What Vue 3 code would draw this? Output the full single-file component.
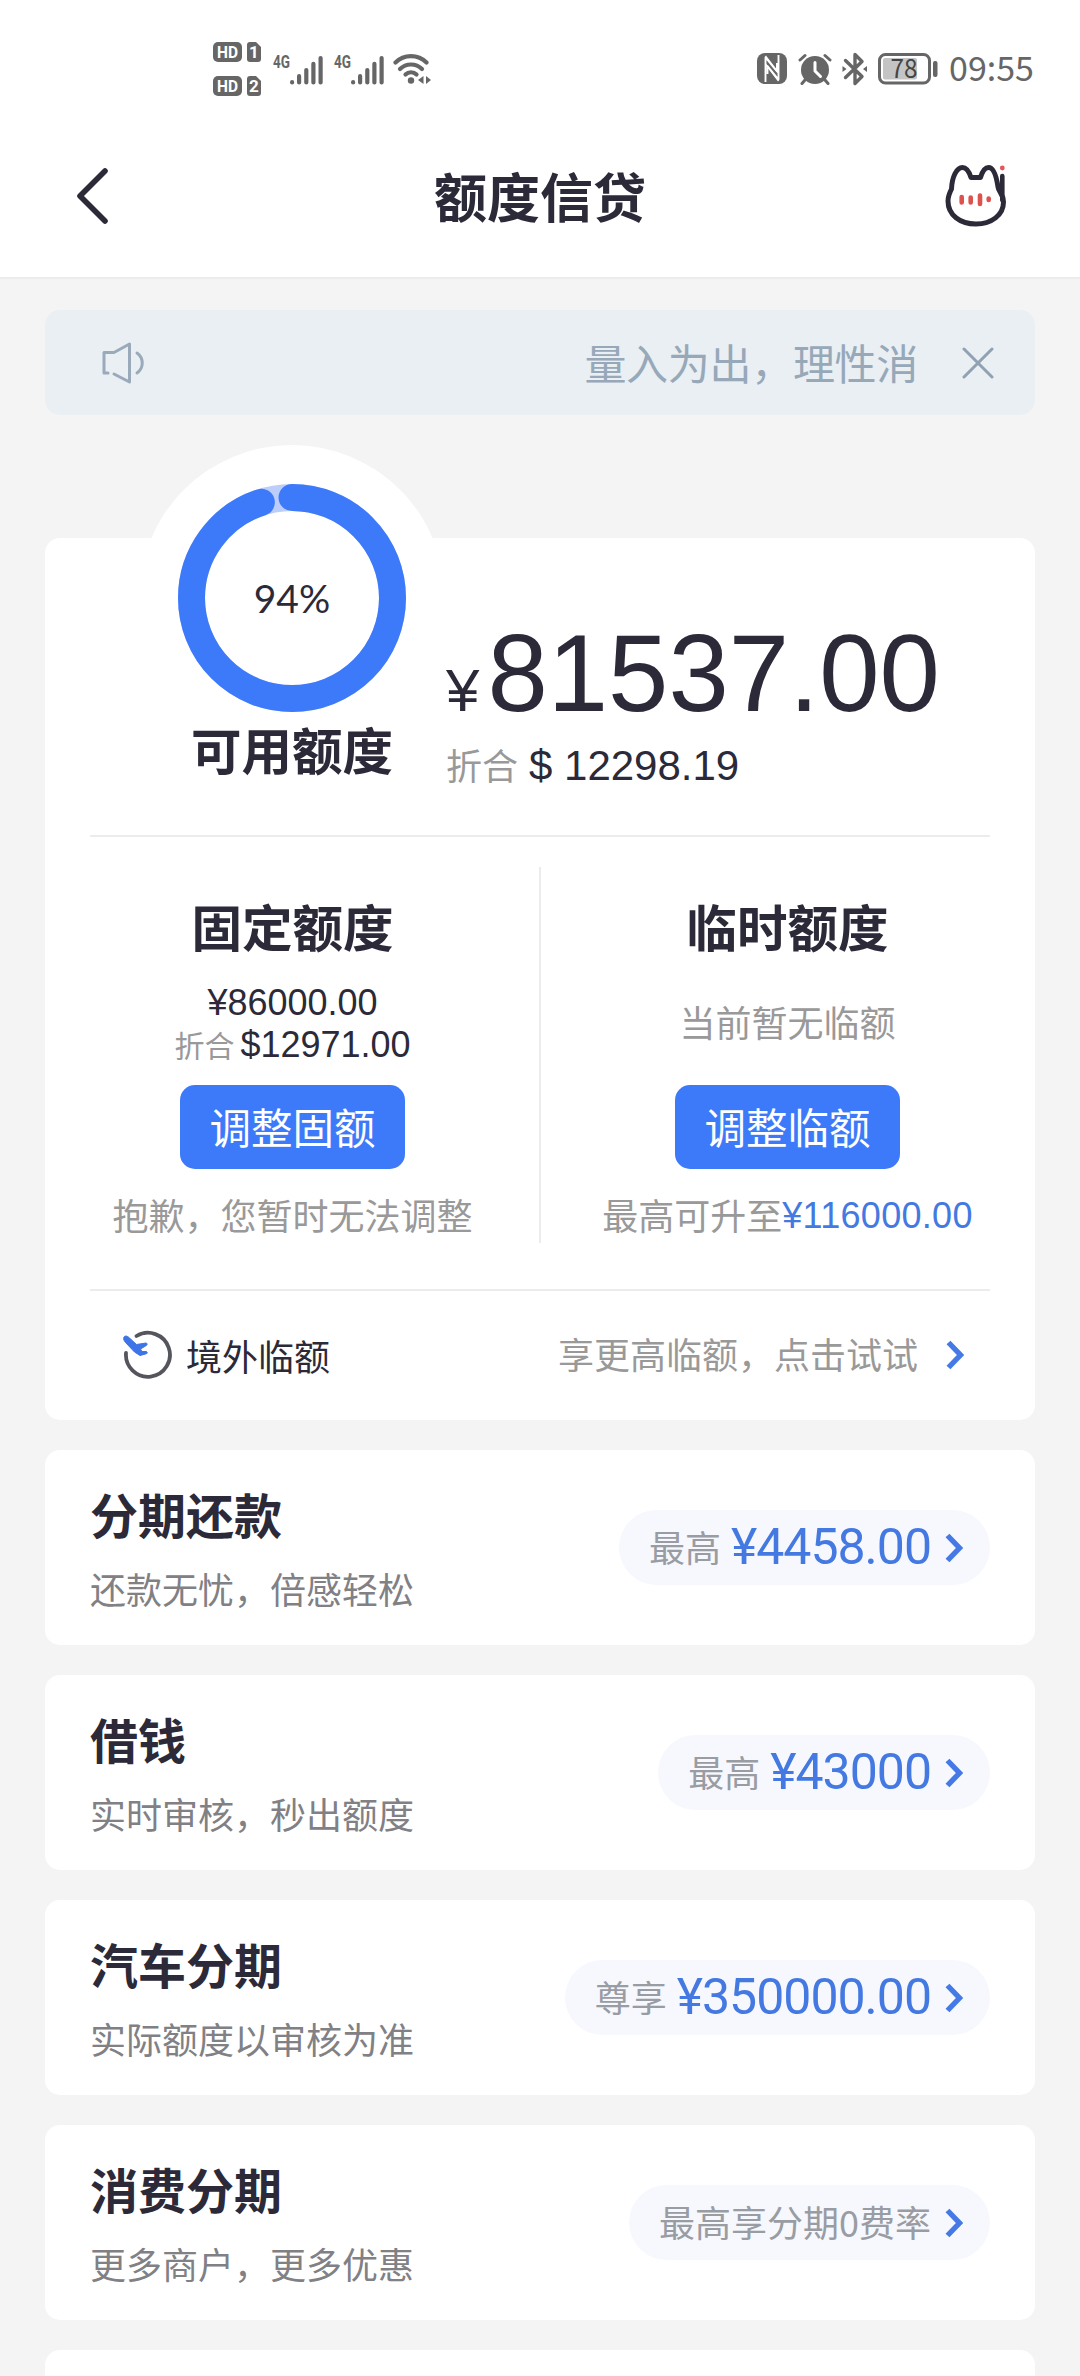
<script setup>
const products = [
  { title: '分期还款', desc: '还款无忧，倍感轻松', label: '最高', amount: '¥4458.00' },
  { title: '借钱', desc: '实时审核，秒出额度', label: '最高', amount: '¥43000' },
  { title: '汽车分期', desc: '实际额度以审核为准', label: '尊享', amount: '¥350000.00' },
  { title: '消费分期', desc: '更多商户，更多优惠', label: '最高享分期0费率', amount: '' },
]

const radius = 100.5
const circumference = 2 * Math.PI * radius
const usedArc = circumference * 0.949
</script>

<template>
  <div class="page">
    <header class="top">
      <div class="status">
        <div class="status-left">
          <div class="hd-col">
            <svg v-for="n in 2" :key="n" class="hd" width="49" height="20" viewBox="0 0 49 20">
              <rect x="0" y="0" width="29" height="20" rx="5" fill="#666" />
              <text x="4" y="16" class="hd-text" textLength="21" lengthAdjust="spacingAndGlyphs">HD</text>
              <path d="M37 0h6l5 5v12a3 3 0 0 1-3 3h-8a3 3 0 0 1-3-3V3a3 3 0 0 1 3-3z" fill="#666" />
              <text x="41" y="16" class="hd-text" text-anchor="middle">{{ n }}</text>
            </svg>
          </div>
          <svg v-for="n in 2" :key="'s' + n" class="signal" width="53" height="34" viewBox="-3 -2 53 34">
            <text x="0" y="14" class="net" textLength="17" lengthAdjust="spacingAndGlyphs">4G</text>
            <g stroke="#666" stroke-width="4.2" stroke-linecap="round">
              <path d="M19.5 28.2v.3M26.5 22.2v6.3M33.7 16v12.5M40.8 9.8v18.7M48 4v24.5" transform="translate(-.4 0)" />
            </g>
          </svg>
          <svg class="wifi" width="38" height="32" viewBox="0 0 38 32">
            <g fill="none" stroke="#666" stroke-width="4.200" stroke-linecap="round">
              <path d="M2.500 9.500C11 1 25 1 33.500 9.500" />
              <path d="M7 16c6-6 16-6 22 0" />
              <path d="M12.500 21.500c3-3 8-3 11 0" />
            </g>
            <circle cx="18" cy="27.500" r="3.200" fill="#666" />
            <path d="M30.500 23v8l-5.500-4zM33 23l5 4-5 4z" fill="#666" />
          </svg>
        </div>
        <div class="status-right">
          <svg class="nfc" width="30" height="31" viewBox="0 0 30 31">
            <rect x="0" y="0" width="30" height="31" rx="8" fill="#666" />
            <path d="M8.500 29V4.500L20 18.500V10M21.500 2V26.500L10.500 13V21" fill="none" stroke="#fff" stroke-width="1.900" stroke-linejoin="round" />
            <path d="M8.500 3L21.500 20M8.500 11L21.500 28" stroke="#fff" stroke-width="1.300" />
          </svg>
          <svg class="alarm" width="34" height="32" viewBox="0 0 34 32">
            <circle cx="17" cy="17" r="14" fill="#666" />
            <path d="M2 7l5-4.500M32 7l-5-4.500M7 27l-3 3.500M27 27l3 3.500" stroke="#666" stroke-width="3" stroke-linecap="round" />
            <path d="M17 9.500V18l5.500 5.500" fill="none" stroke="#fff" stroke-width="3" stroke-linecap="round" stroke-linejoin="round" />
          </svg>
          <svg class="bt" width="26" height="34" viewBox="0 0 26 34">
            <path d="M3.500 8.500L20 24.500l-7 7V2.500l7 7L3.500 25.500" fill="none" stroke="#666" stroke-width="3.400" stroke-linecap="round" stroke-linejoin="round" />
            <path d="M.5 14v6l4-3zM25 14v6l-4-3z" fill="#666" />
          </svg>
          <svg class="battery" width="60" height="32" viewBox="0 0 60 32">
            <rect x="1.500" y="1.500" width="50" height="28.500" rx="6" fill="#fff" stroke="#666" stroke-width="3" />
            <rect x="5" y="5" width="34" height="21.500" rx="2" fill="#c4c4c4" />
            <rect x="55" y="8" width="4.500" height="16" rx="2" fill="#666" />
            <text x="12.500" y="25" class="battery-text" textLength="27" lengthAdjust="spacingAndGlyphs">78</text>
          </svg>
          <span class="clock">09:55</span>
        </div>
      </div>
      <nav class="nav">
        <svg class="back" width="34" height="58" viewBox="0 0 34 58">
          <path d="M29 4L4 29l25 25" fill="none" stroke="#2c2a38" stroke-width="5.600" stroke-linecap="round" stroke-linejoin="round" />
        </svg>
        <h1>额度信贷</h1>
        <svg class="cat" width="64" height="64" viewBox="0 0 64 64">
          <path d="M27 13.500H36.500C38.500 7 41 3.500 44.500 3.500C50 3.500 52.500 13 54 23C54.500 28 59.500 30 59.500 38C59.500 51 47.500 60 32 60C16 60 4 51 4 37C4 32 6 28 7.500 25C8 13 12.500 3.500 18.500 3.500C22.500 3.500 25 7.500 27 13.500Z" fill="none" stroke="#2c2a38" stroke-width="5" stroke-linejoin="round" />
          <path d="M58.300 12V36" stroke="#2c2a38" stroke-width="4.600" stroke-linecap="round" />
          <circle cx="58.300" cy="4" r="2.400" fill="#e2575a" />
          <path d="M17.700 33v5.500M26.700 33.500v5M36 31.500v8.500M44.700 34.500v1.500" stroke="#de524e" stroke-width="4.600" stroke-linecap="round" />
        </svg>
      </nav>
    </header>

    <section class="notice">
      <svg width="46" height="44" viewBox="0 0 46 44">
        <path d="M7 32H3V11.500h10L28.500 3v38L13 33" fill="none" stroke="#9aaaba" stroke-width="3" stroke-linecap="round" stroke-linejoin="round" />
        <path d="M36 12c7 5 7 15 0 20" fill="none" stroke="#9aaaba" stroke-width="3" stroke-linecap="round" />
      </svg>
      <span class="notice-text">量入为出，理性消</span>
      <svg class="close" width="32" height="32" viewBox="0 0 32 32">
        <path d="M2 2l28 28M30 2L2 30" stroke="#8fa1b3" stroke-width="3" stroke-linecap="round" />
      </svg>
    </section>

    <section class="card quota">
      <div class="bubble"></div>
      <div class="summary">
        <div class="ring-col">
          <div class="ring">
            <svg width="228" height="228" viewBox="0 0 228 228">
              <circle cx="114" cy="114" :r="radius" fill="none" stroke="#bdcdfa" stroke-width="27" />
              <circle
                cx="114" cy="114" :r="radius" fill="none" stroke="#3d7afa" stroke-width="27"
                stroke-linecap="round" :stroke-dasharray="`${usedArc} ${circumference}`"
                transform="rotate(-90 114 114)"
              />
            </svg>
            <span class="percent">94%</span>
          </div>
          <h2>可用额度</h2>
        </div>
        <div class="total">
          <div class="total-main"><span class="yen">¥</span><span class="big">81537.00</span></div>
          <div class="total-sub"><span class="gray">折合</span><span class="num">$ 12298.19</span></div>
        </div>
      </div>

      <div class="split">
        <div class="col">
          <h2>固定额度</h2>
          <div class="figures">
            <div class="num">¥86000.00</div>
            <div class="converted"><span>折合</span><span class="num">$12971.00</span></div>
          </div>
          <button>调整固额</button>
          <p>抱歉，您暂时无法调整</p>
        </div>
        <div class="bar"></div>
        <div class="col">
          <h2>临时额度</h2>
          <div class="figures empty">当前暂无临额</div>
          <button>调整临额</button>
          <p>最高可升至<span class="num blue">¥116000.00</span></p>
        </div>
      </div>

      <div class="overseas">
        <svg class="plane" width="50" height="50" viewBox="0 0 50 50">
          <path d="M14.500 6A22 22 0 1 1 4 23" fill="none" stroke="#55555e" stroke-width="3.800" stroke-linecap="round" />
          <path d="M2 7C3.500 5 6 6.500 7.500 8L14.500 14.500L24 13C26 13.500 25 15.500 23.500 16L18.500 19L20 21.500L24.500 21.500C26 22.500 25 24 23.500 24L18 25.500L12.500 22L3.500 12.500C2 10.500 1 9 2 7Z" fill="#3d74e8" stroke="#3d74e8" stroke-width="1" stroke-linejoin="round" />
        </svg>
        <span class="overseas-title">境外临额</span>
        <span class="overseas-tip">享更高临额，点击试试</span>
        <svg class="chev" width="18" height="30" viewBox="0 0 18 30">
          <path d="M2.500 2.500L14.500 15L2.500 27.500" fill="none" stroke="#4479e6" stroke-width="5.400" />
        </svg>
      </div>
    </section>

    <section v-for="item in products" :key="item.title" class="card product">
      <div class="product-text">
        <h3>{{ item.title }}</h3>
        <p>{{ item.desc }}</p>
      </div>
      <div class="pill">
        <span class="pill-label">{{ item.label }}</span>
        <span v-if="item.amount" class="pill-amount">{{ item.amount }}</span>
        <svg width="18" height="30" viewBox="0 0 18 30">
          <path d="M2.500 2.500L14.500 15L2.500 27.500" fill="none" stroke="#4479e6" stroke-width="5.400" />
        </svg>
      </div>
    </section>
    <section class="card product"></section>
  </div>
</template>

<style>
body {
  background: #f4f4f4;
}
</style>

<style scoped>
.page {
  width: 1080px;
  height: 2376px;
  overflow: hidden;
  background: #f4f4f4;
  color: #2c2a38;
  font-family: "Noto Sans CJK SC", "Noto Sans", sans-serif;
}
h1, h2, h3, p {
  margin: 0;
}
svg {
  display: block;
  flex: none;
}
.num {
  font-family: "Liberation Sans", Arial, sans-serif;
}

.top {
  box-sizing: border-box;
  height: 279px;
  background: #fff;
  border-bottom: 2px solid #ececec;
}
.status {
  display: flex;
  justify-content: space-between;
  align-items: center;
  height: 137px;
  padding: 0 46px 0 213px;
}
.status-left, .status-right {
  display: flex;
  align-items: center;
}
.hd-col {
  display: flex;
  flex-direction: column;
  gap: 14px;
}
.hd-text {
  font: 700 17px Roboto, sans-serif;
  fill: #fff;
}
.net {
  font: 700 19px Roboto, sans-serif;
  fill: #666;
}
.signal {
  margin-left: 8px;
}
.wifi {
  margin-left: 9px;
}
.alarm {
  margin-left: 11px;
}
.bt {
  margin-left: 10px;
}
.battery {
  margin-left: 10px;
}
.battery-text {
  font: 400 26px "Noto Sans CJK SC", sans-serif;
  fill: #444;
}
.clock {
  margin-left: 11px;
  font-size: 34px;
  line-height: 40px;
  padding-bottom: 3px;
  color: #666;
}

.nav {
  display: grid;
  grid-template-columns: 64px 1fr 64px;
  align-items: center;
  height: 118px;
  padding: 0 72px 0 76px;
}
.nav h1 {
  font-size: 53px;
  line-height: 70px;
  font-weight: 700;
  text-align: center;
  padding: 0 4px 2px 0;
}

.notice {
  display: flex;
  align-items: center;
  box-sizing: border-box;
  height: 105px;
  margin: 31px 45px 0;
  padding: 0 41px 0 56px;
  border-radius: 15px;
  background: #e9eff3;
}
.notice-text {
  margin-left: auto;
  font-size: 42px;
  line-height: 60px;
  letter-spacing: -0.3px;
  padding-bottom: 2px;
  color: #97a8b9;
}
.close {
  margin-left: 44px;
}

.card {
  margin: 0 45px;
  border-radius: 15px;
  background: #fff;
}
.quota {
  position: relative;
  height: 882px;
  margin-top: 123px;
}
.bubble {
  position: absolute;
  left: 94px;
  top: -93px;
  width: 306px;
  height: 306px;
  border-radius: 50%;
  background: #fff;
}
.summary {
  position: relative;
  display: flex;
  box-sizing: border-box;
  height: 299px;
  margin: 0 45px;
  padding-left: 88px;
  border-bottom: 2px solid #ececec;
}
.ring-col {
  width: 228px;
  margin-top: -54px;
  text-align: center;
}
.ring {
  display: grid;
  place-items: center;
}
.ring > * {
  grid-area: 1 / 1;
}
.percent {
  font: 400 39px/50px Lato, sans-serif;
}
h2 {
  font-size: 50.500px;
  line-height: 60px;
  font-weight: 700;
}
.ring-col h2 {
  margin-top: 6px;
}
.total {
  margin: 82px 0 0 40px;
}
.total-main {
  display: flex;
  align-items: baseline;
  font-family: "Liberation Sans", Arial, sans-serif;
  height: 108px;
}
.yen {
  font-size: 60px;
  line-height: 60px;
}
.big {
  margin-left: 8px;
  font-size: 108.500px;
  line-height: 108px;
}
.total-sub {
  display: flex;
  align-items: baseline;
  gap: 11px;
  margin-top: 12px;
  font-size: 42px;
  line-height: 50px;
}
.gray {
  font-size: 36px;
  line-height: 48px;
  color: #999;
}

.split {
  display: flex;
  height: 452px;
}
.bar {
  width: 2px;
  height: 376px;
  margin: 30px -1px 0;
  background: #ececec;
}
.col {
  display: flex;
  flex-direction: column;
  align-items: center;
  width: 495px;
  padding-top: 58px;
}
.figures {
  height: 84px;
  margin-top: 27px;
  font-size: 36px;
  line-height: 42px;
  text-align: center;
}
.figures.empty {
  line-height: 78px;
  color: #999;
}
.converted {
  display: flex;
  align-items: baseline;
  gap: 6px;
}
.converted span:first-child {
  font-size: 30px;
  line-height: 38px;
  color: #999;
}
button {
  width: 225px;
  height: 84px;
  margin-top: 19px;
  padding: 0 0 2px;
  border: 0;
  border-radius: 15px;
  background: #3d7afa;
  color: #fff;
  font: 400 41.500px/82px "Noto Sans CJK SC", sans-serif;
}
.col p {
  height: 48px;
  margin-top: 21px;
  font-size: 36px;
  line-height: 48px;
  white-space: nowrap;
  color: #999;
}
.blue {
  line-height: 30px;
  vertical-align: 2px;
  letter-spacing: 0.300px;
  color: #4479e2;
}

.overseas {
  display: flex;
  align-items: center;
  box-sizing: border-box;
  height: 131px;
  margin: 0 45px;
  padding: 0 26px 2px 32px;
  border-top: 2px solid #ececec;
  font-size: 36px;
  line-height: 50px;
}
.overseas-title {
  margin-left: 14px;
}
.overseas-tip {
  margin: 0 28px 0 auto;
  padding-bottom: 4px;
  color: #999;
}

.product {
  display: flex;
  justify-content: space-between;
  align-items: center;
  box-sizing: border-box;
  height: 195px;
  margin-top: 30px;
  padding: 0 45px;
}
.product h3 {
  font-size: 48px;
  line-height: 60px;
  font-weight: 700;
}
.product p {
  margin-top: 20px;
  font-size: 36px;
  line-height: 50px;
  color: #808085;
}
.pill {
  display: flex;
  align-items: center;
  height: 75px;
  padding: 0 27px 0 30px;
  border-radius: 38px;
  background: #f6f8fd;
}
.pill-label {
  font-size: 36px;
  line-height: 72px;
  padding-bottom: 3px;
  color: #999ca3;
}
.pill-amount {
  margin-left: 10px;
  font: 400 50px/75px Roboto, sans-serif;
  letter-spacing: -1px;
  color: #4479e2;
}
.pill svg {
  margin-left: 14px;
}
</style>
